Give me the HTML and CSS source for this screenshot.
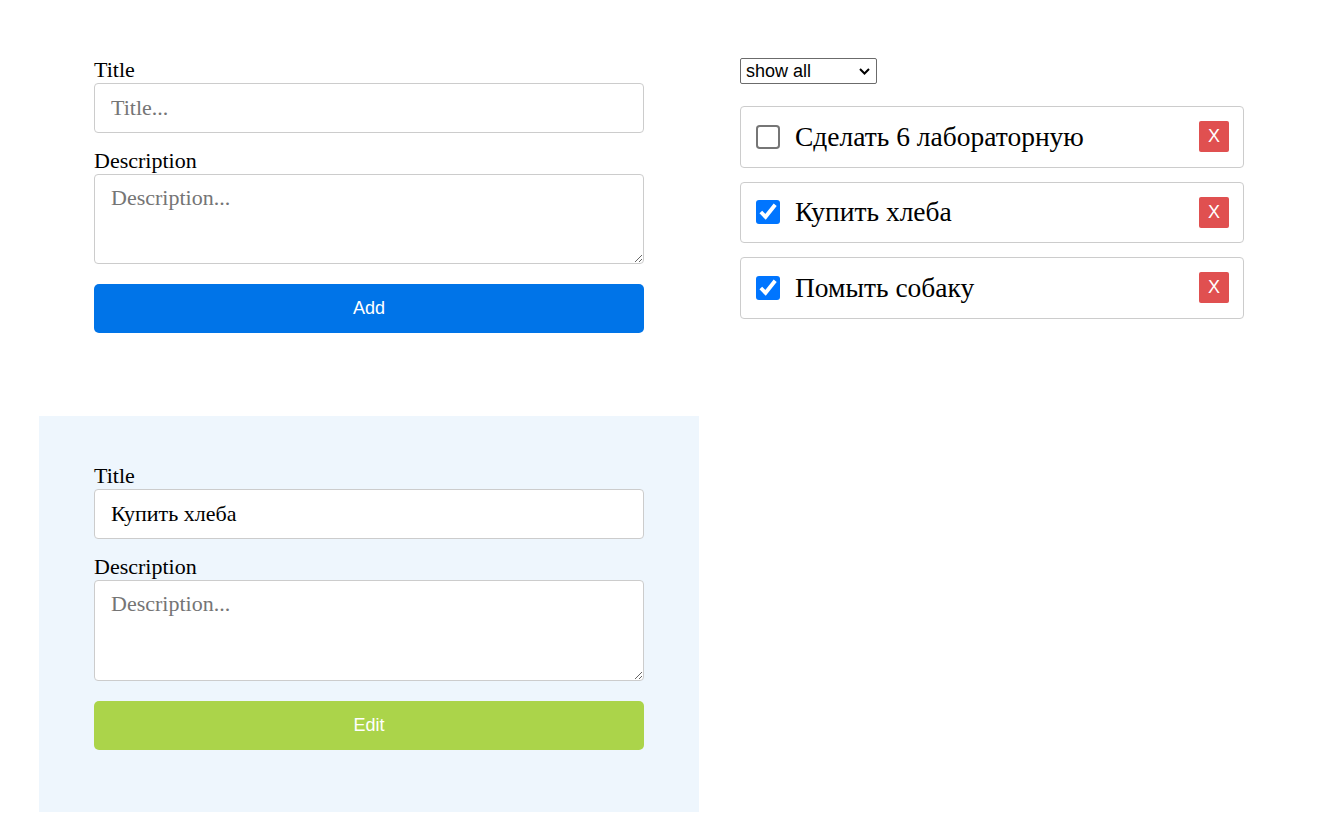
FILE: index.html
```html
<!DOCTYPE html>
<html lang="ru">
<head>
<meta charset="utf-8">
<title>Todo</title>
<link rel="stylesheet" href="styles.css">
</head>
<body>
<div class="page">
  <div class="left">
    <form class="todo-form">
      <label class="field-label" for="t1">Title</label>
      <input class="field-input" id="t1" type="text" placeholder="Title...">
      <label class="field-label field-label--gap" for="d1">Description</label>
      <textarea class="field-area" id="d1" placeholder="Description..."></textarea>
      <button type="button" class="btn btn--add">Add</button>
    </form>
    <form class="todo-form todo-form--edit">
      <label class="field-label" for="t2">Title</label>
      <input class="field-input" id="t2" type="text" value="Купить хлеба">
      <label class="field-label field-label--gap" for="d2">Description</label>
      <textarea class="field-area field-area--tall" id="d2" placeholder="Description..."></textarea>
      <button type="button" class="btn btn--edit">Edit</button>
    </form>
  </div>
  <div class="right">
    <div class="filter">
      <select class="filter-select">
        <option>show all</option>
        <option>done</option>
        <option>not done</option>
      </select>
      <svg class="filter-arrow" width="11" height="7" viewBox="0 0 11 7"><path d="M1 1 L5.5 5.5 L10 1" fill="none" stroke="#000" stroke-width="2"/></svg>
    </div>
    <ul class="todo-list">
      <li class="todo-item">
        <input class="todo-check" type="checkbox">
        <span class="todo-text">Сделать 6 лабораторную</span>
        <button type="button" class="todo-del">X</button>
      </li>
      <li class="todo-item">
        <input class="todo-check" type="checkbox" checked>
        <span class="todo-text">Купить хлеба</span>
        <button type="button" class="todo-del">X</button>
      </li>
      <li class="todo-item">
        <input class="todo-check" type="checkbox" checked>
        <span class="todo-text">Помыть собаку</span>
        <button type="button" class="todo-del">X</button>
      </li>
    </ul>
  </div>
</div>
</body>
</html>
```

FILE: styles.css
```css
* { box-sizing: border-box; }

body {
  margin: 0;
  background: #fff;
  font-family: "Liberation Serif", "Times New Roman", serif;
  color: #000;
}

.page {
  display: flex;
  align-items: flex-start;
  gap: 41px;
  padding: 10px 0 0 39px;
}

.left {
  width: 660px;
  display: flex;
  flex-direction: column;
  gap: 21px;
}

.todo-form {
  display: flex;
  flex-direction: column;
  padding: 47px 55px 62px;
}

.todo-form--edit {
  background: #eef6fd;
}

.field-label {
  display: block;
  font-size: 22px;
  line-height: 25px;
  margin-bottom: 1px;
}

.field-label--gap {
  margin-top: 15px;
}

.field-input,
.field-area {
  display: block;
  width: 100%;
  border: 1px solid #cccccc;
  border-radius: 4px;
  background: #fff;
  font-family: "Liberation Serif", "Times New Roman", serif;
  font-size: 22px;
  color: #000;
  padding: 0 16px;
  outline: none;
}

.field-input {
  height: 50px;
}

.field-area {
  height: 90px;
  padding-top: 10px;
  resize: vertical;
}

.field-area--tall {
  height: 101px;
}

.field-input::placeholder,
.field-area::placeholder {
  color: #757575;
}

.btn {
  margin-top: 20px;
  height: 49px;
  border: none;
  border-radius: 5px;
  color: #fff;
  font-family: "Liberation Sans", Arial, sans-serif;
  font-size: 18px;
  cursor: pointer;
}

.btn--add { background: #0074e8; }
.btn--edit { background: #abd44a; }

.right {
  width: 504px;
  padding-top: 48px;
}

.filter {
  position: relative;
  width: 137px;
  height: 26px;
}

.filter-select {
  appearance: none;
  -webkit-appearance: none;
  width: 137px;
  height: 26px;
  border: 1px solid #6b6b6b;
  border-radius: 2px;
  background: #fff;
  font-family: "Liberation Sans", Arial, sans-serif;
  font-size: 18px;
  color: #000;
  padding: 0 0 0 5px;
  margin: 0;
}

.filter-arrow {
  position: absolute;
  right: 7px;
  top: 10px;
  pointer-events: none;
}

.todo-list {
  list-style: none;
  margin: 22px 0 0;
  padding: 0;
  display: flex;
  flex-direction: column;
  gap: 14px;
}

.todo-item {
  display: flex;
  align-items: center;
  height: 61.5px;
  padding: 0 14px 0 15px;
  border: 1px solid #cccccc;
  border-radius: 4px;
}

.todo-check {
  width: 16px;
  height: 16px;
  margin: 0;
  zoom: 1.5;
  flex: none;
}

.todo-check:not(:checked) {
  appearance: none;
  -webkit-appearance: none;
  border: 1.34px solid #767676;
  border-radius: 2.5px;
  background: #fff;
}

.todo-text {
  flex: 1;
  margin-left: 15px;
  font-size: 27.5px;
  line-height: 32px;
}

.todo-del {
  width: 30px;
  height: 31px;
  border: none;
  border-radius: 2px;
  background: #e05050;
  color: #fff;
  font-family: "Liberation Sans", Arial, sans-serif;
  font-size: 18px;
  padding: 0;
  cursor: pointer;
}
```
